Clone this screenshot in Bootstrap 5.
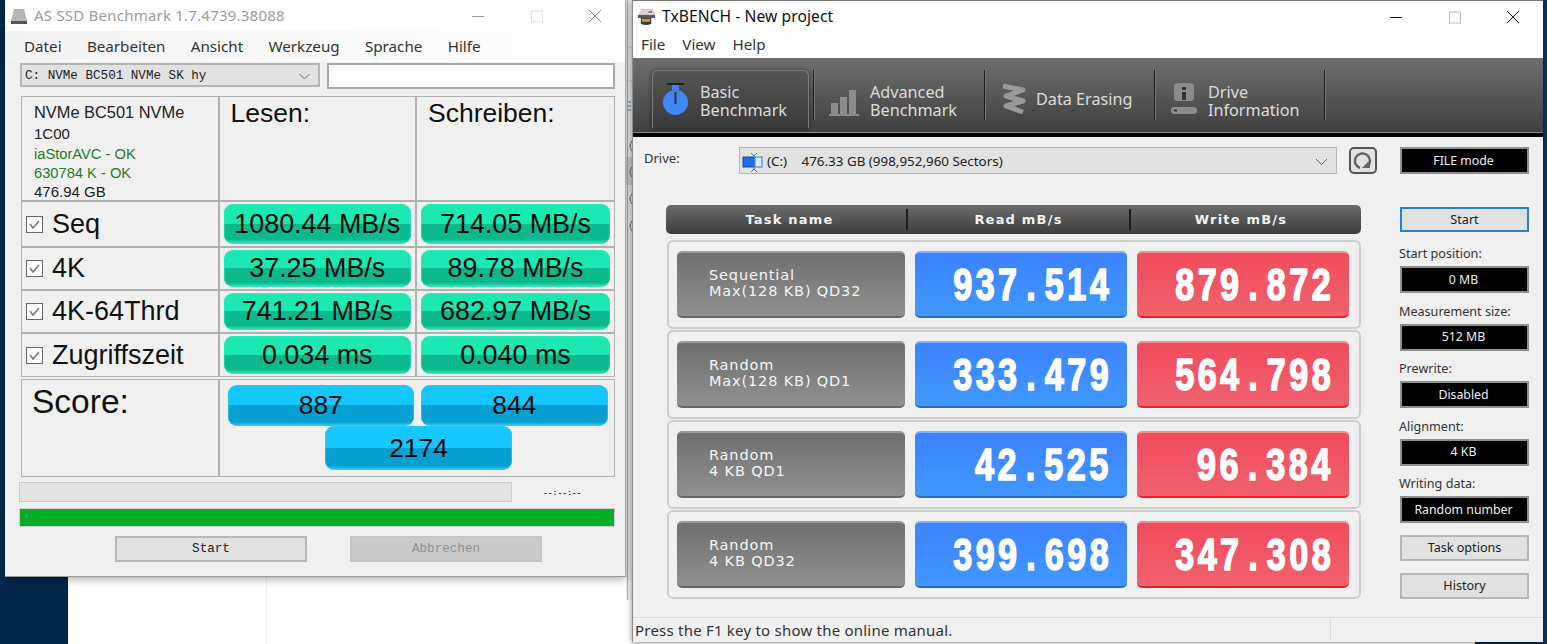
<!DOCTYPE html>
<html lang="en"><head><meta charset="utf-8"><title>AS SSD and TxBENCH</title>
<link rel="stylesheet" href="https://cdn.jsdelivr.net/npm/bootstrap@5.3.0/dist/css/bootstrap.min.css">
<style>
html,body{margin:0;height:644px;overflow:hidden;background:#fff}
.desk{position:relative;width:1547px;height:644px;overflow:hidden;background:linear-gradient(90deg,#02264a 68px,#fff 68px,#fff 266px,#eee 266px,#eee 267px,#fff 267px,#fff 1475px,#0a2f55 1475px);font-family:"Noto Sans",sans-serif;color:#222}
.gapstrip{position:absolute;left:626px;top:0}
.navyr{position:absolute;left:1543px;top:0;width:4px;height:644px;background:#0a3560}
.win-a{position:absolute;left:5px;top:0;width:621px;height:577px;background:#f0f0f0;box-shadow:0 2px 9px rgba(0,0,0,.35);border-bottom:1px solid #999;border-right:1px solid #aaa}
.win-b{position:absolute;left:632px;top:0;width:911px;height:642px;background:#f0f0f0;box-shadow:0 1px 6px rgba(0,0,0,.45);border-left:1px solid #8a8a8a;border-top:1px solid #777}
.cap{height:31px;background:#fff;font-size:15px;color:#9c9c9c;padding-left:4px;letter-spacing:.22px;gap:5px}
.mn{height:31px;background:linear-gradient(90deg,#f3f3f3,#fafafa 60%,#fff);padding-left:19px;gap:25.300px;font-size:15.2px;color:#333}
.ctl{margin-left:auto;margin-right:23px;flex-shrink:0}
.toprow{padding:1px 10px 0 15px;gap:7px}
.cmb{width:300px;height:24px;background:#e2e2e2;border:2px solid #b5b5b5;font:12.6px/1 "Liberation Mono",monospace;padding:2px 8px 0 3px;color:#222}
.fld.form-control{width:288px;height:26px;border:2px solid #a8a8a8;border-radius:0;padding:0;background:#fff}
.mat{margin:7px 10px 0 16px;display:grid;grid-template-columns:197.5px 197.5px 199px;font-family:"Liberation Sans",sans-serif;color:#111}
.ce{border:1px solid #b2b2b2;outline:1px solid #eee;outline-offset:-2px;background:#f0f0f0;min-width:0}
.r0{height:105px}.r1{height:46px}.r2{height:43px}.r3{height:43px}.r4{height:44px}
.hd{font-size:26.5px;line-height:30px;padding:1px 0 0 11px}
.inf{padding:4px 0 0 12px;font-size:15px;line-height:19px;color:#222}
.inf .o{color:#1f7f24;font-size:14.7px;line-height:18.500px}
.inf .v{line-height:22px}
.inf .v.first{font-size:16.4px}
.lb{font-size:27px;padding-left:4px;gap:9px}
.pad{padding:2px 4px 2px 4px}
.bar{flex:1;height:100%;border-radius:9px;font-size:26.9px;background:linear-gradient(#1ce8b1 0 50%,#0bb98c 50% 88%,#35f0bd);box-shadow:inset 0 0 0 1px rgba(40,240,190,.5);color:#0a0a0a;line-height:1}
.scr{margin:2px 0 0 16px;width:594px;display:grid;grid-template-columns:198px 396px;height:98px;font-family:"Liberation Sans",sans-serif;color:#111}
.sl{font-size:33.5px;line-height:38px;padding:3px 0 0 10px}
.sv{padding:5px 6px 0 7px;flex-wrap:wrap;column-gap:7px;justify-content:center;align-content:flex-start}
.blu{width:186.500px;height:41px;border-radius:9px;font-size:26.4px;background:linear-gradient(#16c7ff 0 50%,#069fcf 50% 90%,#3ad0ff);color:#0a0a0a;box-shadow:inset 0 0 0 1px rgba(50,200,255,.6)}
.blu.big{height:44px;width:187px;padding-top:2px;margin-left:2px}
.prog{margin:5px 0 0 14px;gap:31px;font:bold 8px "Liberation Mono",monospace;color:#222}
.pg{width:493px;height:20px;background:#e4e4e4;border:1px solid #ccc}
.grn{margin:6px 10px 0 14px;height:19px;background:#06ad28;border:1px solid #d0d0d0}
.btnrow{margin:9px 0 0 110px;gap:43px}
.btn.flat{width:192px;height:26px;padding:0;border:2px solid #b8b8b8;border-radius:0;background:#e1e1e1;font:12.6px "Liberation Mono",monospace;color:#222}
.btn.flat.off,.btn.flat.off:disabled{background:#cacaca;color:#8f8f8f;opacity:1;border-color:#c4c4c4}
.capb{height:32px;background:#fff;font-size:15.6px;color:#111;padding-left:3px;gap:5px;letter-spacing:.08px}
.mb{height:25px;background:#fff;padding:0 0 2px 8px;gap:17px;font-size:15.2px;color:#333}
.tb{height:75px;background:linear-gradient(#6f6f6f,#3f3f3f);border-bottom:1px solid #8a8a8a;box-shadow:0 4px 0 #000;padding:12px 0 0 19px;color:#dcdcdc;font-size:16.2px;line-height:18px}
.tabi{height:58px;gap:11px;padding-top:13px;flex-shrink:0}
.tabi.on{width:157px;border:1px solid #7b7b7b;border-bottom:0;border-radius:6px 6px 0 0;background:linear-gradient(#555,#3a3a3a);padding:12px 0 0 9px;gap:10px;box-shadow:0 0 5px rgba(0,0,0,.5)}
.sepv{width:2px;height:50px;background:#1c1c1c;border-right:1px solid #777;flex-shrink:0}
.drv{padding:18px 0 0 11px;font-size:13px;color:#333}
.dlab{width:95px;margin-top:-2px}
.dcmb{width:598px;height:27px;background:#e2e2e2;border:1px solid #b5b5b5;padding:2px 8px 0 2px;gap:3px;font-size:13.4px;color:#222;margin-top:-4px}
.rf{width:28px;height:27px;margin:-4px 0 0 12px;background:#e2e2e2;border:2px solid #555;border-radius:5px}
.fm{width:129px;height:27px;margin:-4px 0 0 23px}
.blk{background:#000;color:#eee;border:2px solid #909090;font-size:12.3px;height:27px;padding:1px 2px 0 0}
.bdy{padding:31px 0 0 33px}
.tbl{width:695px}
.thd{height:29px;border-radius:5px;background:linear-gradient(#6c6c6c,#3d3d3d);color:#f2f2f2;font:bold 13px "DejaVu Sans",sans-serif;letter-spacing:1.2px}
.thd>div{height:21px}
.c1{width:242px;border-right:2px solid #1c1c1c;padding-left:7px}
.c2{width:223px;border-right:2px solid #1c1c1c}
.c3{width:220px}
.rw{margin-top:1px;height:89px;width:694px;margin-left:1px;border:2px solid #cdcdcd;border-radius:6px;padding:9px 10px 0 8px;gap:10px}
.thd+.rw{margin-top:6px}
.nm{width:228px;height:67px;border-radius:5px;background:linear-gradient(#6f6f6f,#909090);border-top:2px solid #9a9a9a;border-bottom:2px solid #666;color:#f5f5f5;font:14.5px/16px "DejaVu Sans",sans-serif;padding:0 0 4px 32px;letter-spacing:.85px}
.val{width:212px;height:67px;border-radius:5px;color:#fff;padding-right:15px;line-height:1}
.num{display:inline-block;transform:scaleX(.76);transform-origin:right center;font:bold 45px/1 "Liberation Sans",sans-serif;letter-spacing:4.5px;-webkit-text-stroke:1.6px #fff;white-space:nowrap}
.dt{padding:0 7.500px}
.rd{background:linear-gradient(#3d82ff,#3f98ff);border-top:2px solid #7fb0ff;border-bottom:2px solid #2a6cc4}
.wr{background:linear-gradient(#f04c5c,#f0626e);border-top:2px solid #f58c92;border-bottom:2px solid #e82028}
.sd{width:129px;margin:2px 0 0 39px;font-size:12.6px;color:#333}
.sl2{height:34px;padding-bottom:2px;margin-left:-1px}
.sl3{height:30.500px;padding-bottom:2px;margin-left:-1px}
.btn.sb{width:129px;height:26px;padding:1px 0 0;background:#e1e1e1;border:2px solid #b5b5b5;border-radius:0;font-size:12.6px;color:#222;font-family:"Noto Sans",sans-serif}
.btn.sb.act{border-color:#2a80d0;height:25px}
.sb.m{margin-top:12px}
.sts{position:absolute;left:0;right:0;bottom:0;height:25px;border-top:1px solid #d9d9d9;font-size:15px;color:#333;padding-left:2px;letter-spacing:.22px}
.sts i{position:absolute;left:697px;top:2px;bottom:2px;width:1px;background:#d9d9d9}
</style></head><body>
<div class="desk">
<svg class="gapstrip" width="7" height="600" viewBox="0 0 7 600"><rect width="7" height="600" fill="#f2f2f2"/><rect y="157" width="7" height="28" fill="#d2d2d2"/><rect x="1" width="1" height="600" fill="#b0b0b0"/><path d="M0 47h7M0 81h7" stroke="#ccc"/><path d="M2 102h3M2 106h3M2 110h3" stroke="#4a7ab0"/><path d="M6 141q-4 5 0 10M6 167q-4 5 0 10M6 194q-4 5 0 10M6 221q-4 5 0 10" fill="none" stroke="#5a6a7a"/></svg>
<div class="navyr"></div>

<section class="win-a d-flex flex-column">
 <div class="cap d-flex align-items-center">
  <svg width="20" height="20" viewBox="0 0 20 20"><path d="M5 3h10l3 12H2z" fill="#b4b4b4"/><rect x="2" y="15" width="16" height="3" fill="#555"/></svg>
  <span>AS SSD Benchmark 1.7.4739.38088</span>
  <svg class="ctl" width="130" height="14" viewBox="0 0 130 14"><path d="M0 7.500h12" stroke="#999"/><rect x="59.500" y="2" width="11" height="11" fill="none" stroke="#e2e2e2"/><path d="M117 1l12 12M129 1l-12 12" stroke="#888"/></svg>
 </div>
 <div class="mn d-flex align-items-center"><span>Datei</span><span>Bearbeiten</span><span>Ansicht</span><span>Werkzeug</span><span>Sprache</span><span>Hilfe</span></div>
 <div class="toprow d-flex">
  <div class="cmb d-flex align-items-center justify-content-between"><span>C: NVMe BC501 NVMe SK hy</span><svg width="11" height="7" viewBox="0 0 11 7"><path d="M.5 1l5 5 5-5" fill="none" stroke="#777"/></svg></div>
  <input class="fld form-control" aria-label="Kommentar">
 </div>
 <div class="mat">
  <div class="ce r0 inf"><div class="v first">NVMe BC501 NVMe</div><div class="v">1C00</div><div class="o">iaStorAVC - OK</div><div class="o">630784 K - OK</div><div>476.94 GB</div></div>
  <div class="ce r0 hd">Lesen:</div><div class="ce r0 hd">Schreiben:</div>

  <div class="ce r1 lb d-flex align-items-center"><svg width="17" height="17" viewBox="0 0 17 17"><rect x=".5" y=".5" width="16" height="16" fill="#fff" stroke="#666"/><path d="M4 8l3 4 6-7" fill="none" stroke="#777" stroke-width="1.500"/></svg>Seq</div>
  <div class="ce r1 pad d-flex"><div class="bar d-flex align-items-center justify-content-center">1080.44 MB/s</div></div>
  <div class="ce r1 pad d-flex"><div class="bar d-flex align-items-center justify-content-center">714.05 MB/s</div></div>

  <div class="ce r2 lb d-flex align-items-center"><svg width="17" height="17" viewBox="0 0 17 17"><rect x=".5" y=".5" width="16" height="16" fill="#fff" stroke="#666"/><path d="M4 8l3 4 6-7" fill="none" stroke="#777" stroke-width="1.500"/></svg>4K</div>
  <div class="ce r2 pad d-flex"><div class="bar d-flex align-items-center justify-content-center">37.25 MB/s</div></div>
  <div class="ce r2 pad d-flex"><div class="bar d-flex align-items-center justify-content-center">89.78 MB/s</div></div>

  <div class="ce r3 lb d-flex align-items-center"><svg width="17" height="17" viewBox="0 0 17 17"><rect x=".5" y=".5" width="16" height="16" fill="#fff" stroke="#666"/><path d="M4 8l3 4 6-7" fill="none" stroke="#777" stroke-width="1.500"/></svg>4K-64Thrd</div>
  <div class="ce r3 pad d-flex"><div class="bar d-flex align-items-center justify-content-center">741.21 MB/s</div></div>
  <div class="ce r3 pad d-flex"><div class="bar d-flex align-items-center justify-content-center">682.97 MB/s</div></div>

  <div class="ce r4 lb d-flex align-items-center"><svg width="17" height="17" viewBox="0 0 17 17"><rect x=".5" y=".5" width="16" height="16" fill="#fff" stroke="#666"/><path d="M4 8l3 4 6-7" fill="none" stroke="#777" stroke-width="1.500"/></svg>Zugriffszeit</div>
  <div class="ce r4 pad d-flex"><div class="bar d-flex align-items-center justify-content-center">0.034 ms</div></div>
  <div class="ce r4 pad d-flex"><div class="bar d-flex align-items-center justify-content-center">0.040 ms</div></div>
 </div>
 <div class="scr">
  <div class="ce sl">Score:</div>
  <div class="ce sv d-flex">
   <div class="blu d-flex align-items-center justify-content-center">887</div>
   <div class="blu d-flex align-items-center justify-content-center">844</div>
   <div class="blu big d-flex align-items-center justify-content-center">2174</div>
  </div>
 </div>
 <div class="prog d-flex align-items-center"><div class="pg"></div><span>--:--:--</span></div>
 <div class="grn"></div>
 <div class="btnrow d-flex"><button class="btn flat">Start</button><button class="btn flat off" disabled>Abbrechen</button></div>
</section>

<section class="win-b">
 <div class="capb d-flex align-items-center">
  <svg width="21" height="22" viewBox="0 0 22 22"><path d="M3 9l3-6h11l3 6z" fill="#d8d8d8" stroke="#999" stroke-width=".5"/><rect x="13" y="5" width="4" height="1.500" fill="#d33"/><rect x="2" y="9" width="18" height="3" fill="#555"/><path d="M5 12h11v6q-5 3-11 0z" fill="#3c3c3c"/><rect x="6" y="13" width="9" height="3" fill="#c89a3a"/></svg>
  <span>TxBENCH - New project</span>
  <svg class="ctl" width="130" height="14" viewBox="0 0 130 14"><path d="M0 7.500h12" stroke="#111"/><rect x="59.500" y="2" width="11" height="11" fill="none" stroke="#bbb"/><path d="M117 1l12 12M129 1l-12 12" stroke="#111"/></svg>
 </div>
 <div class="mb d-flex align-items-center"><span>File</span><span>View</span><span>Help</span></div>
 <div class="tb d-flex">
  <div class="tabi on d-flex"><svg width="28" height="34" viewBox="0 0 28 34"><rect x="5" y="0" width="17" height="2" fill="#222"/><rect x="10" y="2" width="7" height="5" fill="#3f88f5"/><circle cx="13.500" cy="19.500" r="12.500" fill="#3f88f5"/><rect x="12.500" y="9" width="2" height="12" fill="#333"/></svg><div>Basic<br>Benchmark</div></div>
  <div class="sepv" style="margin-left:4px"></div>
  <div class="tabi d-flex" style="width:169px;padding-left:14px"><svg width="30" height="30" viewBox="0 0 30 30" class="mt-1"><path d="M2 16h7v11H2zM11 10h7v17h-7zM20 3h7v24h-7z" fill="#8c8c8c"/><rect x="0" y="27" width="30" height="2" fill="#8c8c8c"/></svg><div>Advanced<br>Benchmark</div></div>
  <div class="sepv"></div>
  <div class="tabi d-flex align-items-center" style="width:168px;padding-left:14px;padding-top:8px;height:50px;gap:10px"><svg width="26" height="32" viewBox="0 0 26 32"><path d="M3 3l20 4-17 6 17 5-17 5 17 6" fill="none" stroke="#999" stroke-width="5" stroke-linejoin="round"/></svg><div>Data Erasing</div></div>
  <div class="sepv"></div>
  <div class="tabi d-flex" style="width:168px;padding-left:15px;gap:11px"><svg width="26" height="32" viewBox="0 0 26 32"><rect x="3" y="0" width="20" height="18" rx="3" fill="#8c8c8c"/><rect x="11" y="4" width="4" height="3" fill="#333"/><rect x="11" y="9" width="4" height="8" fill="#333"/><rect x="0" y="24" width="26" height="7" rx="3" fill="#8c8c8c"/><rect x="3" y="26.500" width="3" height="2" fill="#333"/></svg><div>Drive<br>Information</div></div>
  <div class="sepv"></div>
 </div>
 <div class="drv d-flex">
  <div class="dlab">Drive:</div>
  <div class="dcmb d-flex align-items-center"><svg width="22" height="22" viewBox="0 0 22 22"><rect x="1" y="6" width="11" height="10" fill="#1a6fe8" stroke="#134c9e"/><rect x="13" y="6" width="7" height="10" fill="#dbeafd" stroke="#3a78c8"/><path d="M9 2l3 3 3-3M12 5v13M9 21l3-3 3 3" fill="none" stroke="#3a78c8"/></svg><span><span class="me-1">(C:)</span>&nbsp;&nbsp; 476.33 GB (998,952,960 Sectors)</span><svg class="ms-auto" width="13" height="8" viewBox="0 0 13 8"><path d="M1 1l5.500 5.500L12 1" fill="none" stroke="#666"/></svg></div>
  <div class="rf d-flex align-items-center justify-content-center"><svg width="20" height="20" viewBox="0 0 20 20"><path d="M7 17A7.500 7.500 0 1 1 15 15" fill="none" stroke="#666" stroke-width="2.500"/><path d="M17 9v8h-8z" fill="#666"/></svg></div>
  <div class="fm blk d-flex align-items-center justify-content-center">FILE mode</div>
 </div>
 <div class="bdy d-flex">
  <div class="tbl">
   <div class="thd d-flex align-items-center"><div class="c1 d-flex align-items-center justify-content-center">Task name</div><div class="c2 d-flex align-items-center justify-content-center">Read mB/s</div><div class="c3 d-flex align-items-center justify-content-center">Write mB/s</div></div>
   <div class="rw d-flex"><div class="nm d-flex align-items-center">Sequential<br>Max(128 KB) QD32</div><div class="val rd d-flex align-items-center justify-content-end"><span class="num">937<span class="dt">.</span>514</span></div><div class="val wr d-flex align-items-center justify-content-end"><span class="num">879<span class="dt">.</span>872</span></div></div>
   <div class="rw d-flex"><div class="nm d-flex align-items-center">Random<br>Max(128 KB) QD1</div><div class="val rd d-flex align-items-center justify-content-end"><span class="num">333<span class="dt">.</span>479</span></div><div class="val wr d-flex align-items-center justify-content-end"><span class="num">564<span class="dt">.</span>798</span></div></div>
   <div class="rw d-flex"><div class="nm d-flex align-items-center">Random<br>4 KB QD1</div><div class="val rd d-flex align-items-center justify-content-end"><span class="num">42<span class="dt">.</span>525</span></div><div class="val wr d-flex align-items-center justify-content-end"><span class="num">96<span class="dt">.</span>384</span></div></div>
   <div class="rw d-flex"><div class="nm d-flex align-items-center">Random<br>4 KB QD32</div><div class="val rd d-flex align-items-center justify-content-end"><span class="num">399<span class="dt">.</span>698</span></div><div class="val wr d-flex align-items-center justify-content-end"><span class="num">347<span class="dt">.</span>308</span></div></div>
  </div>
  <aside class="sd d-flex flex-column">
   <button class="btn sb act">Start</button>
   <div class="sl2 d-flex align-items-end">Start position:</div><div class="blk d-flex align-items-center justify-content-center">0 MB</div>
   <div class="sl3 d-flex align-items-end">Measurement size:</div><div class="blk d-flex align-items-center justify-content-center">512 MB</div>
   <div class="sl3 d-flex align-items-end">Prewrite:</div><div class="blk d-flex align-items-center justify-content-center">Disabled</div>
   <div class="sl3 d-flex align-items-end">Alignment:</div><div class="blk d-flex align-items-center justify-content-center">4 KB</div>
   <div class="sl3 d-flex align-items-end">Writing data:</div><div class="blk d-flex align-items-center justify-content-center">Random number</div>
   <button class="btn sb m">Task options</button>
   <button class="btn sb m">History</button>
  </aside>
 </div>
 <div class="sts d-flex align-items-center">Press the F1 key to show the online manual.<i></i></div>
</section>
</div>
<script src="https://cdn.jsdelivr.net/npm/bootstrap@5.3.0/dist/js/bootstrap.bundle.min.js"></script>
</body></html>
